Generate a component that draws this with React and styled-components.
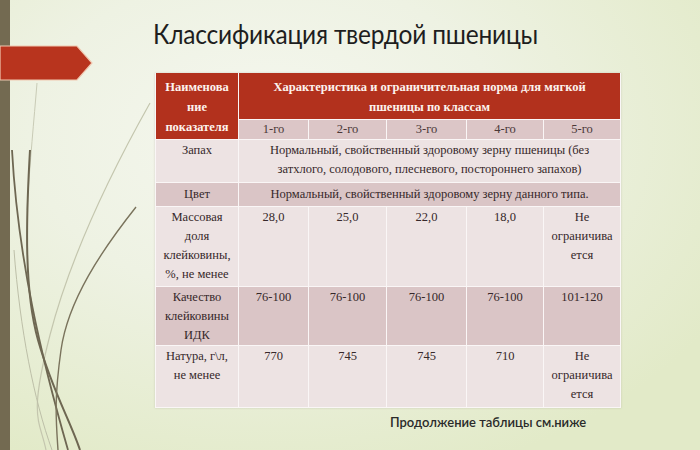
import React from "react";
import styled, { createGlobalStyle } from "styled-components";

const Global = createGlobalStyle`
  html, body { margin: 0; padding: 0; }
  body { width: 700px; height: 450px; overflow: hidden; }
`;

const SERIF = `"Liberation Serif", "DejaVu Serif Condensed", "DejaVu Serif", "Times New Roman", serif`;

const Slide = styled.div`
  position: relative;
  display: flex;
  width: 700px;
  height: 450px;
  overflow: hidden;
  background: radial-gradient(ellipse 75% 80% at 38% 30%, #f5f7ef 0%, #eef2e3 45%, #e2eac8 100%);
`;

const Stripe = styled.div`
  width: 10px;
  flex-shrink: 0;
  background: #736a51;
`;

const ArrowBox = styled.svg`
  position: absolute;
  left: 0;
  top: 45px;
`;

const Grass = styled.svg`
  position: absolute;
  left: 0;
  top: 0;
  pointer-events: none;
`;

const Content = styled.div`
  position: relative;
  display: flex;
  flex-direction: column;
  padding: 16px 0 0 143px;
`;

const Title = styled.h1`
  margin: 0;
  font-family: Lato, "Liberation Sans", sans-serif;
  font-weight: 400;
  font-size: 24.5px;
  line-height: 36px;
  color: #1e1e1e;
  letter-spacing: -0.2px;
  transform: scaleY(1.12);
  transform-origin: left center;
`;

const Table = styled.table`
  margin: 21px 0 0 2px;
  width: 465px;
  table-layout: fixed;
  border-collapse: collapse;
  box-shadow: 0 0 2px rgba(120, 100, 100, 0.25);
`;

const Cell = styled.td`
  border: 1.5px solid #faf6f6;
  padding: ${(p) => (p.$pad ? p.$pad : "1px 2px 0")};
  text-align: center;
  vertical-align: ${(p) => p.$valign || "top"};
  background: ${(p) => p.$bg};
  height: ${(p) => p.$h}px;
  box-sizing: border-box;
  font-family: ${SERIF};
  font-size: 12.5px;
  line-height: 19px;
  color: #36282a;
`;

const HeadCell = styled.th`
  border: 1.5px solid #faf6f6;
  border-top: none;
  padding: 4px 2px 0;
  text-align: center;
  vertical-align: top;
  background: #b2311d;
  color: #fdf3ee;
  font-family: ${SERIF};
  font-weight: 700;
  font-size: 12.5px;
  line-height: 20px;
  height: ${(p) => p.$h}px;
  box-sizing: border-box;
`;

const ClassCell = styled.td`
  border: 1.5px solid #faf6f6;
  padding: 0;
  text-align: center;
  vertical-align: middle;
  background: #dcc6c7;
  color: #4a3838;
  font-family: ${SERIF};
  font-size: 12.5px;
  line-height: 18px;
  height: 20px;
  box-sizing: border-box;
`;

const Note = styled.div`
  margin: 6px 0 0 237px;
  font-family: Lato, "Liberation Sans", sans-serif;
  font-size: 13px;
  font-weight: 600;
  color: #2a2a2a;
`;

const LIGHT = "#ede3e3";
const DARK = "#dac5c6";

const classes = ["1-го", "2-го", "3-го", "4-го", "5-го"];

const rows = [
  { name: ["Массовая", "доля", "клейковины,", "%, не менее"], vals: ["28,0", "25,0", "22,0", "18,0", ["Не", "ограничива", "ется"]], bg: LIGHT, h: 80 },
  { name: ["Качество", "клейковины", "ИДК"], vals: ["76-100", "76-100", "76-100", "76-100", "101-120"], bg: DARK, h: 56 },
  { name: ["Натура, г\\л,", "не менее"], vals: ["770", "745", "745", "710", ["Не", "ограничива", "ется"]], bg: LIGHT, h: 62 },
];

const Lines = ({ items }) =>
  items.map((t, i) => (
    <React.Fragment key={i}>
      {i > 0 && <br />}
      {t}
    </React.Fragment>
  ));

export default function App() {
  return (
    <>
      <Global />
      <Slide>
        <Stripe />
        <Grass width="170" height="450" viewBox="0 0 170 450">
          <path d="M37,83 C34,120 30,160 27,210" stroke="#c9cbb6" strokeWidth="1" fill="none" />
          <path d="M150,103 C118,160 72,250 50,335 S40,420 46,450" stroke="#c4c6ae" strokeWidth="1.2" fill="none" />
          <path d="M12,150 C18,260 42,360 68,450" stroke="#6e6752" strokeWidth="1.8" fill="none" />
          <path d="M30,150 C26,220 24,290 38,340 S70,420 80,450" stroke="#6e6752" strokeWidth="2" fill="none" />
          <path d="M136,207 C102,250 68,300 61,350 S56,420 58,450" stroke="#7a735c" strokeWidth="1.4" fill="none" />
          <path d="M14,250 C20,330 34,400 52,450" stroke="#bdbfa8" strokeWidth="1" fill="none" />
        </Grass>
        <ArrowBox width="96" height="38" viewBox="0 0 96 38">
          <path d="M0,1 L77,1 L92,18 L77,35 L0,35 Z" fill="#b8341e" stroke="#f0c8b0" strokeWidth="1.2" />
        </ArrowBox>
        <Content>
          <Title>Классификация твердой пшеницы</Title>
          <Table>
            <colgroup>
              <col style={{ width: 83 }} />
              <col style={{ width: 70 }} />
              <col style={{ width: 78 }} />
              <col style={{ width: 80 }} />
              <col style={{ width: 77 }} />
              <col style={{ width: 77 }} />
            </colgroup>
            <tbody>
              <tr>
                <HeadCell rowSpan={2} $h={66}>
                  Наименова<br />ние<br />показателя
                </HeadCell>
                <HeadCell colSpan={5} $h={46}>
                  Характеристика и ограничительная норма для мягкой<br />пшеницы по классам
                </HeadCell>
              </tr>
              <tr>
                {classes.map((c) => (
                  <ClassCell key={c}>{c}</ClassCell>
                ))}
              </tr>
              <tr>
                <Cell $bg={LIGHT} $h={43}>Запах</Cell>
                <Cell $bg={LIGHT} $h={43} colSpan={5}>
                  Нормальный, свойственный здоровому зерну пшеницы (без<br />затхлого, солодового, плесневого, постороннего запахов)
                </Cell>
              </tr>
              <tr>
                <Cell $bg={DARK} $h={24} $valign="middle" $pad="0 2px">Цвет</Cell>
                <Cell $bg={DARK} $h={24} $valign="middle" $pad="0 2px" colSpan={5}>
                  Нормальный, свойственный здоровому зерну данного типа.
                </Cell>
              </tr>
              {rows.map((r, i) => (
                <tr key={i}>
                  <Cell $bg={r.bg} $h={r.h}>
                    <Lines items={r.name} />
                  </Cell>
                  {r.vals.map((v, j) => (
                    <Cell key={j} $bg={r.bg} $h={r.h}>
                      {Array.isArray(v) ? <Lines items={v} /> : v}
                    </Cell>
                  ))}
                </tr>
              ))}
            </tbody>
          </Table>
          <Note>Продолжение таблицы см.ниже</Note>
        </Content>
      </Slide>
    </>
  );
}
